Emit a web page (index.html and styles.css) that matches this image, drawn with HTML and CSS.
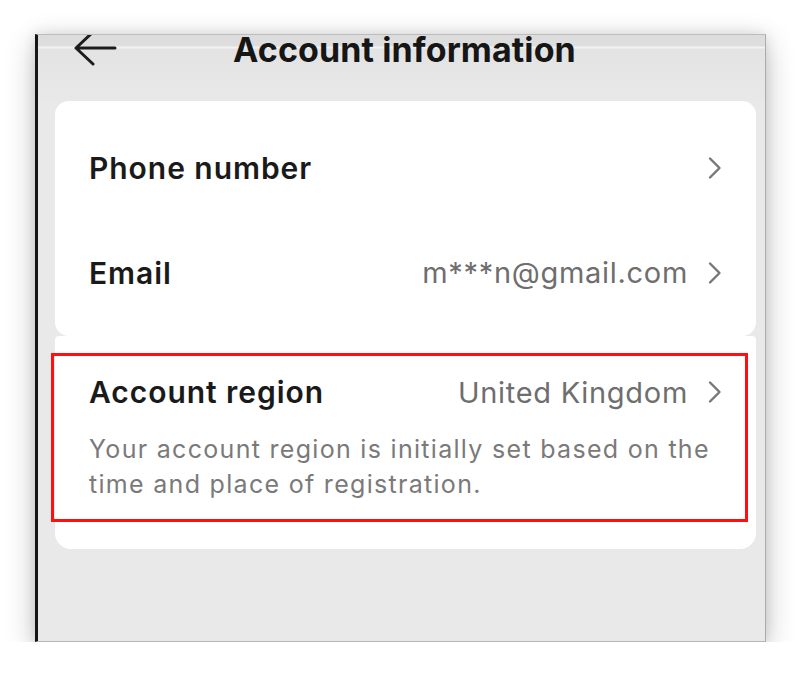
FILE: index.html
```html
<!DOCTYPE html>
<html lang="en">
<head>
<meta charset="UTF-8">
<meta name="viewport" content="width=device-width, initial-scale=1.0">
<title>Account information</title>
<link rel="stylesheet" href="styles.css">
</head>
<body>

<div class="shot">
    <div class="topbar">
        <svg class="back" width="44" height="36" viewBox="0 0 44 36">
            <path d="M42 18 H3 M20 2 L3 18 L20 34" fill="none" stroke="#1c1c1c" stroke-width="3" stroke-linecap="round" stroke-linejoin="round"/>
        </svg>
        <h1 class="title">Account information</h1>
        <span></span>
    </div>

    <!-- contact details -->
    <div class="card">
        <div class="row">
            <span class="label">Phone number</span>
            <span class="value">
                <svg class="chev" width="15" height="24" viewBox="0 0 15 24"><path d="M3 2.5 L12.5 12 L3 21.5" fill="none" stroke="#777" stroke-width="2.4" stroke-linecap="round" stroke-linejoin="round"/></svg>
            </span>
        </div>
        <div class="row">
            <span class="label">Email</span>
            <span class="value">m***n@gmail.com
                <svg class="chev" width="15" height="24" viewBox="0 0 15 24"><path d="M3 2.5 L12.5 12 L3 21.5" fill="none" stroke="#777" stroke-width="2.4" stroke-linecap="round" stroke-linejoin="round"/></svg>
            </span>
        </div>
    </div>

    <!-- region, marked with the red box -->
    <div class="card card-region">
        <div class="row row-region">
            <span class="label">Account region</span>
            <span class="value">United Kingdom
                <svg class="chev" width="15" height="24" viewBox="0 0 15 24"><path d="M3 2.5 L12.5 12 L3 21.5" fill="none" stroke="#777" stroke-width="2.4" stroke-linecap="round" stroke-linejoin="round"/></svg>
            </span>
        </div>
        <p class="note">Your account region is initially set based on the time and place of registration.</p>
        <div class="highlight"></div>
    </div>
</div>

</body>
</html>
```

FILE: styles.css
```css
body {
    margin: 0;
    background-color: #fff;
    font-family: Inter, "Noto Sans", sans-serif;
    color: #161823;
}
.shot {
    box-sizing: border-box;
    width: 731px;
    height: 608px;
    margin: 34px 0 0 35px;
    overflow: hidden;
    background-color: #e9e9e9;
    border-top: 1px solid #bdbdbd;
    border-left: 3px solid #161616;
    border-right: 1px solid #ababab;
    border-bottom: 1px solid #b5b5b5;
    box-shadow: 0 8px 28px rgba(0, 0, 0, 0.24), 0 0 12px rgba(0, 0, 0, 0.1);
}
.topbar {
    display: grid;
    grid-template-columns: 1fr auto 1fr;
    height: 66px;
    background: linear-gradient(#dcdcdc 0, #dedede 11px, #f2f2f2 12px, #f2f2f2 13px, #e3e3e3 14px, #e8e8e8 66px);
}
.back {
    margin: -5px 0 0 35px;
    overflow: visible;
}
.title {
    margin: 0;
    padding: 0 0 0 6px;
    font-size: 34px;
    font-weight: 700;
    line-height: 30px;
    letter-spacing: 0.1px;
    color: #161616;
}
.card {
    position: relative;
    margin: 0 9px 0 17px;
    padding: 14px 0 11px;
    background-color: #fff;
    border-radius: 14px;
}
.card-region {
    padding: 38px 0 47px;
    border-radius: 4px 4px 16px 16px;
}
.row {
    display: flex;
    align-items: center;
    justify-content: space-between;
    height: 105px;
    padding: 0 34px;
}
.row-region {
    height: 36px;
}
.label {
    font-size: 30px;
    font-weight: 600;
    letter-spacing: 0.95px;
    color: #1a1a1a;
}
.value {
    display: flex;
    align-items: center;
    gap: 19px;
    font-size: 29px;
    letter-spacing: 0.7px;
    color: #6e6e6e;
}
.note {
    margin: 22px 0 0;
    padding: 0 34px;
    font-size: 25px;
    line-height: 35px;
    letter-spacing: 1.3px;
    color: #7a7a7a;
}
.highlight {
    position: absolute;
    top: 17px;
    left: -4px;
    width: 697px;
    height: 169px;
    box-sizing: border-box;
    border: 3px solid #ff1010;
}
```
